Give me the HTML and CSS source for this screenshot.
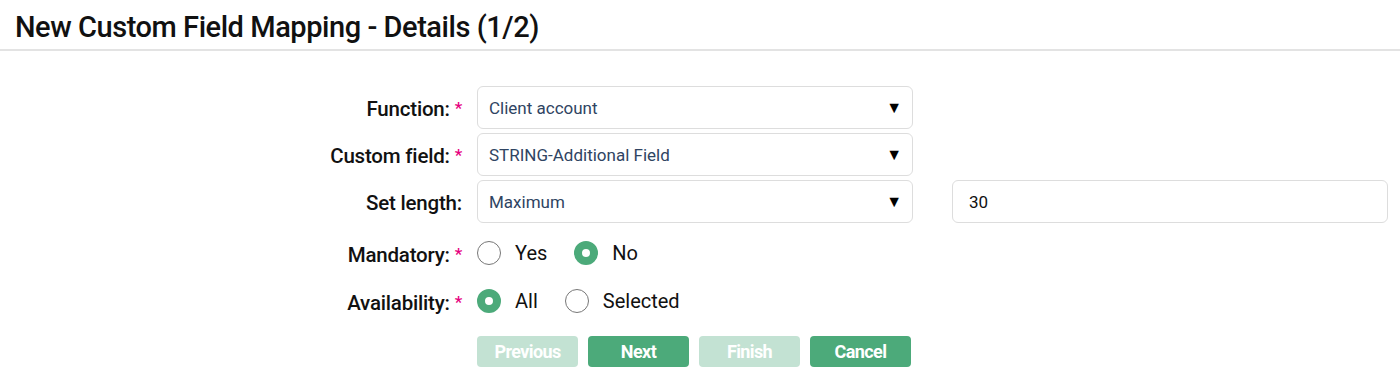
FILE: index.html
```html
<!DOCTYPE html>
<html>
<head>
<meta charset="utf-8">
<link rel="stylesheet" href="styles.css">
</head>
<body>
<header class="page-header">
  <h1 class="page-title">New Custom Field Mapping - Details (1/2)</h1>
</header>
<form class="form">
  <label class="label">Function: <span class="req">*</span></label>
  <div class="select"><span class="select-text">Client account</span><span class="caret">▼</span></div>
  <div class="extra"></div>

  <label class="label">Custom field: <span class="req">*</span></label>
  <div class="select"><span class="select-text">STRING-Additional Field</span><span class="caret">▼</span></div>
  <div class="extra"></div>

  <label class="label">Set length:</label>
  <div class="select"><span class="select-text">Maximum</span><span class="caret">▼</span></div>
  <div class="extra input">30</div>

  <label class="label">Mandatory: <span class="req">*</span></label>
  <div class="radios">
    <span class="radio"><span class="dot"></span>Yes</span>
    <span class="radio"><span class="dot on"></span>No</span>
  </div>
  <div class="extra"></div>

  <label class="label">Availability: <span class="req">*</span></label>
  <div class="radios">
    <span class="radio"><span class="dot on"></span>All</span>
    <span class="radio"><span class="dot"></span>Selected</span>
  </div>
  <div class="extra"></div>

  <div></div>
  <div class="buttons">
    <span class="btn disabled">Previous</span>
    <span class="btn">Next</span>
    <span class="btn disabled">Finish</span>
    <span class="btn">Cancel</span>
  </div>
  <div class="extra"></div>
</form>
</body>
</html>
```
FILE: styles.css
```css
* { box-sizing: border-box; }
html, body { margin: 0; padding: 0; background: #fff; }
body { font-family: Roboto, "Liberation Sans", sans-serif; color: #111; }

.page-header {
  border-bottom: 2px solid #e3e3e3;
  height: 51px;
  padding: 9px 0 0 15px;
}
.page-title {
  margin: 0;
  font-size: 29px;
  font-weight: 500;
  letter-spacing: -0.45px;
  line-height: 36px;
  color: #111;
}

.form {
  display: grid;
  grid-template-columns: 462px 436px 460px;
  grid-template-rows: 43px 43px 43px 52px 36px auto;
  column-gap: 15px;
  row-gap: 4px;
  padding-top: 35px;
}
.extra { margin-left: 24px; }

.label {
  text-align: right;
  font-size: 20.5px;
  font-weight: 500;
  letter-spacing: -0.2px;
  align-self: center;
  padding-top: 3px;
  color: #111;
}
.req { color: #e6007e; font-size: 17px; vertical-align: 2px; }

.select, .input {
  height: 43px;
  border: 1px solid #ddd;
  border-radius: 6px;
  display: flex;
  align-items: center;
  padding: 0 10px 0 11px;
  font-size: 17px;
  color: #2f4462;
}
.select-text { flex: 1; }
.caret { font-size: 16px; color: #000; }
.input { color: #111; padding-left: 16px; }

.radios {
  display: flex;
  align-items: center;
  gap: 27px;
  font-size: 20px;
  color: #111;
}
.radio { display: flex; align-items: center; gap: 14px; }
.dot {
  width: 24px; height: 24px;
  border-radius: 50%;
  border: 1px solid #777;
  display: inline-block;
}
.dot.on {
  border: 8px solid #4caa7a;
  background: #fff;
}

.buttons {
  display: flex;
  gap: 10px;
  margin-top: 13px;
}
.btn {
  width: 101px;
  height: 31px;
  border-radius: 4px;
  background: #4caa7a;
  color: #fff;
  font-weight: 700;
  font-size: 18px;
  letter-spacing: -0.6px;
  display: flex;
  align-items: center;
  justify-content: center;
}
.btn.disabled { background: #c3e2d3; }
```
